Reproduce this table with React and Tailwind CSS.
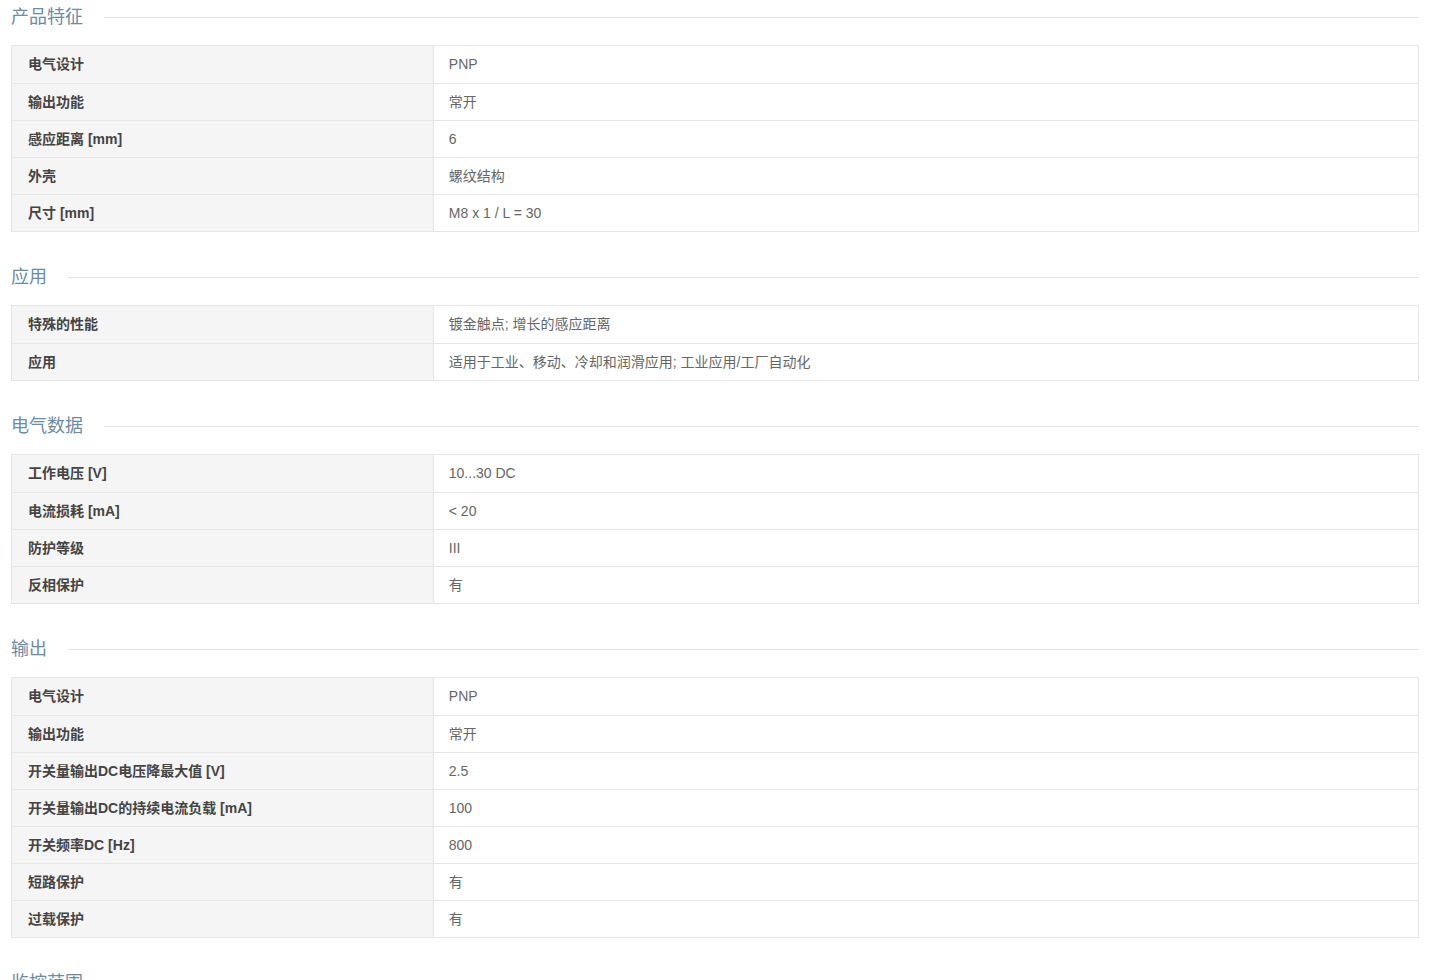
const sections = [
  {
    title: '产品特征',
    rows: [
      ['电气设计', 'PNP'],
      ['输出功能', '常开'],
      ['感应距离 [mm]', '6'],
      ['外壳', '螺纹结构'],
      ['尺寸 [mm]', 'M8 x 1 / L = 30'],
    ],
  },
  {
    title: '应用',
    rows: [
      ['特殊的性能', '镀金触点; 增长的感应距离'],
      ['应用', '适用于工业、移动、冷却和润滑应用; 工业应用/工厂自动化'],
    ],
  },
  {
    title: '电气数据',
    rows: [
      ['工作电压 [V]', '10...30 DC'],
      ['电流损耗 [mA]', '< 20'],
      ['防护等级', 'III'],
      ['反相保护', '有'],
    ],
  },
  {
    title: '输出',
    rows: [
      ['电气设计', 'PNP'],
      ['输出功能', '常开'],
      ['开关量输出DC电压降最大值 [V]', '2.5'],
      ['开关量输出DC的持续电流负载 [mA]', '100'],
      ['开关频率DC [Hz]', '800'],
      ['短路保护', '有'],
      ['过载保护', '有'],
    ],
  },
  { title: '监控范围', rows: [] },
];

function Section({ title, rows }) {
  return (
    <section className="mb-[28px]">
      <div className="flex items-center h-[34px] mb-[11px]">
        <h3 className="text-[18px] leading-none font-normal text-[#6c8ba4] pr-[21px] whitespace-nowrap">{title}</h3>
        <div className="flex-1 h-px bg-[#e3e3e3]" />
      </div>
      {rows.length > 0 && (
        <div className="border border-[#e6e6e6]">
          {rows.map(([k, v], i) => (
            <div key={i} className={`flex h-[37px] ${i > 0 ? 'border-t border-[#e6e6e6]' : ''}`}>
              <div className="w-[30%] bg-[#f5f5f5] border-r border-[#e6e6e6] pl-4 flex items-center text-[14px] font-bold text-[#444]">
                {k}
              </div>
              <div className="flex-1 pl-[15px] flex items-center text-[14px] text-[#666]">{v}</div>
            </div>
          ))}
        </div>
      )}
    </section>
  );
}

export default function App() {
  return (
    <div
      className="bg-white h-[980px] overflow-hidden pl-[11px] pr-[10px]"
      style={{ fontFamily: '"Liberation Sans", "Noto Sans CJK SC", sans-serif' }}
    >
      {sections.map((s) => (
        <Section key={s.title} {...s} />
      ))}
    </div>
  );
}
